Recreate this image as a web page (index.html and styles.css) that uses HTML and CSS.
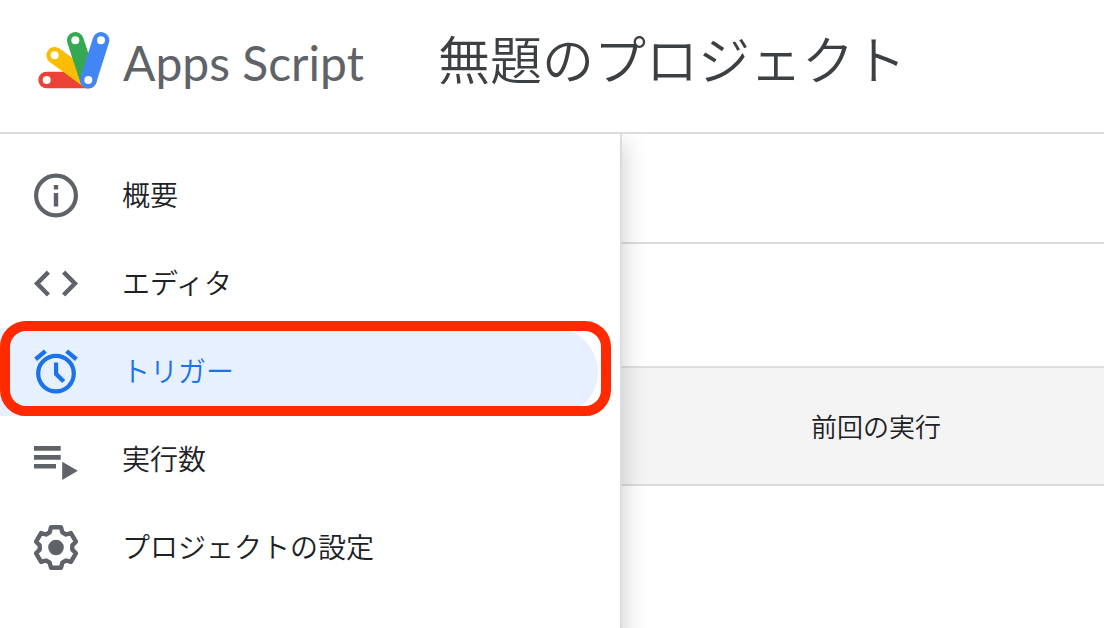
FILE: index.html
```html
<!DOCTYPE html>
<html lang="ja">
<head>
<meta charset="utf-8">
<title>Apps Script</title>
<link rel="stylesheet" href="styles.css">
</head>
<body>
<header class="header">
  <a class="brand" href="#">
    <svg class="brand-logo" viewBox="51 33 222 174" aria-hidden="true">
      <g fill="none" stroke-width="50" stroke-linecap="round">
        <path stroke="#ea4335" d="M80 180H205"/>
        <path stroke="#fbbc04" d="M104 106L205 180"/>
        <path stroke="#34a853" d="M166 61L205 180"/>
        <path stroke="#4285f4" d="M243 61L205 180"/>
      </g>
      <g fill="#fff">
        <circle cx="80" cy="180" r="12"/>
        <circle cx="104" cy="106" r="12"/>
        <circle cx="166" cy="61" r="12"/>
        <circle cx="243" cy="61" r="12"/>
        <circle cx="205" cy="180" r="12"/>
      </g>
    </svg>
    <span class="brand-name">Apps Script</span>
  </a>
  <h1 class="project-title">無題のプロジェクト</h1>
</header>
<div class="body">
  <nav class="sidebar">
    <a class="item" href="#">
      <svg class="icon" viewBox="0 0 52 52" aria-hidden="true">
        <circle cx="26" cy="25.5" r="19.9" fill="none" stroke="currentColor" stroke-width="4.2"/>
        <path d="M23.8 15h4.4v4.4h-4.4zM23.8 23h4.4v13.6h-4.4z"/>
      </svg>
      <span class="label">概要</span>
    </a>
    <a class="item" href="#">
      <svg class="icon" viewBox="0 0 52 52" aria-hidden="true">
        <path d="M16.8 12.6L20 15.8L10.2 25.6L20 35.5L16.8 38.6L4 25.6zM35.2 12.6L32 15.8L41.8 25.6L32 35.5L35.2 38.6L48 25.6z"/>
      </svg>
      <span class="label">エディタ</span>
    </a>
    <a class="item item-active" href="#" aria-current="page">
      <svg class="icon" viewBox="0 0 52 52" aria-hidden="true">
        <circle cx="26" cy="27.6" r="17.8" fill="none" stroke="currentColor" stroke-width="4.2"/>
        <path d="M14 3.4L16.8 6.7L7 14.9L4.2 11.5zM38 3.4L35.2 6.7L45 14.9L47.8 11.5z"/>
        <path d="M24 16.5h4.2V27l7 7l-3 3L24 29z"/>
      </svg>
      <span class="label">トリガー</span>
    </a>
    <a class="item" href="#">
      <svg class="icon" viewBox="0 0 52 52" aria-hidden="true">
        <path d="M4 12h26.7v4.7H4zM4 21h26.7v4.7H4zM4 30h22v4.6H4zM32.2 27.7L47.8 36.7L32.2 46z"/>
      </svg>
      <span class="label">実行数</span>
    </a>
    <a class="item" href="#">
      <svg class="icon" viewBox="0 0 52 52" aria-hidden="true">
        <g transform="translate(26 25.5)">
          <path fill="none" stroke="currentColor" stroke-width="4.4" stroke-linejoin="round" d="M-5-20.2H5L6.3-15.2L10-13L14.9-14.4L19.9-5.8L16.3-2.1V2.1L19.9 5.8L14.9 14.4L10 13L6.3 15.2L5 20.2H-5L-6.3 15.2L-10 13L-14.9 14.4L-19.9 5.8L-16.3 2.1V-2.1L-19.9-5.8L-14.9-14.4L-10-13L-6.3-15.2z"/>
          <circle r="7.8"/>
        </g>
      </svg>
      <span class="label">プロジェクトの設定</span>
    </a>
  </nav>
  <main class="content">
    <div class="toolbar"></div>
    <div class="filters"></div>
    <table class="triggers">
      <thead><tr><th scope="col">前回の実行</th></tr></thead>
    </table>
  </main>
</div>
</body>
</html>
```
FILE: styles.css
```css
* {
  box-sizing: border-box;
}

body {
  margin: 0;
  min-height: 100vh;
  display: flex;
  flex-direction: column;
  background: #fff;
  color: #202124;
  font-family: "Noto Sans CJK JP DemiLight", "Noto Sans CJK JP", sans-serif;
  font-weight: 350;
}

a {
  color: inherit;
  text-decoration: none;
}

.header {
  display: flex;
  align-items: center;
  gap: 74px;
  height: 134px;
  padding: 0 37px 12px;
  border-bottom: 2px solid #dadce0;
}

.brand {
  display: flex;
  align-items: center;
  gap: 12px;
  color: #5f6368;
}

.brand-logo {
  width: 74px;
  height: 58px;
}

.brand-name {
  padding-top: 6px;
  font: 400 48px/60px Lato, sans-serif;
  white-space: nowrap;
}

.project-title {
  margin: 0;
  padding-bottom: 4px;
  color: #3c4043;
  font-size: 52px;
  font-weight: 350;
  line-height: 60px;
  white-space: nowrap;
}

.body {
  display: flex;
  flex: 1;
}

.sidebar {
  flex: 0 0 622px;
  padding: 18px 22px 18px 0;
  border-right: 2px solid #dadce0;
}

.item {
  display: flex;
  align-items: center;
  gap: 40px;
  height: 88px;
  padding-left: 30px;
  border-radius: 0 44px 44px 0;
  font-size: 28px;
  line-height: 40px;
}

.label {
  padding-bottom: 4px;
}

.icon {
  width: 52px;
  height: 52px;
  color: #5f6368;
  fill: currentColor;
}

.item-active {
  position: relative;
  background: #e6f0ff;
  color: #1a73e8;
}

.item-active .icon {
  color: #1a73e8;
}

/* Callout frame over the selected entry */
.item-active::after {
  content: "";
  position: absolute;
  inset: -7px -13px 0 0;
  border: 10px solid #ff2a00;
  border-radius: 26px;
}

.content {
  position: relative;
  flex: 1;
  overflow: hidden;
}

/* Shadow cast by the sidebar */
.content::before {
  content: "";
  position: absolute;
  top: 8px;
  bottom: -20px;
  left: -20px;
  width: 20px;
  box-shadow: 0 0 24px rgba(60, 70, 67, 0.3);
}

.toolbar {
  height: 110px;
  border-bottom: 2px solid #dadce0;
}

.filters {
  height: 124px;
  border-bottom: 2px solid #dedede;
}

.triggers {
  width: 100%;
  border-spacing: 0;
}

.triggers th {
  height: 118px;
  padding: 0 0 2px 189px;
  border-bottom: 2px solid #dadce0;
  background: #f4f4f4;
  font-size: 26px;
  font-weight: 350;
  text-align: left;
}
```
